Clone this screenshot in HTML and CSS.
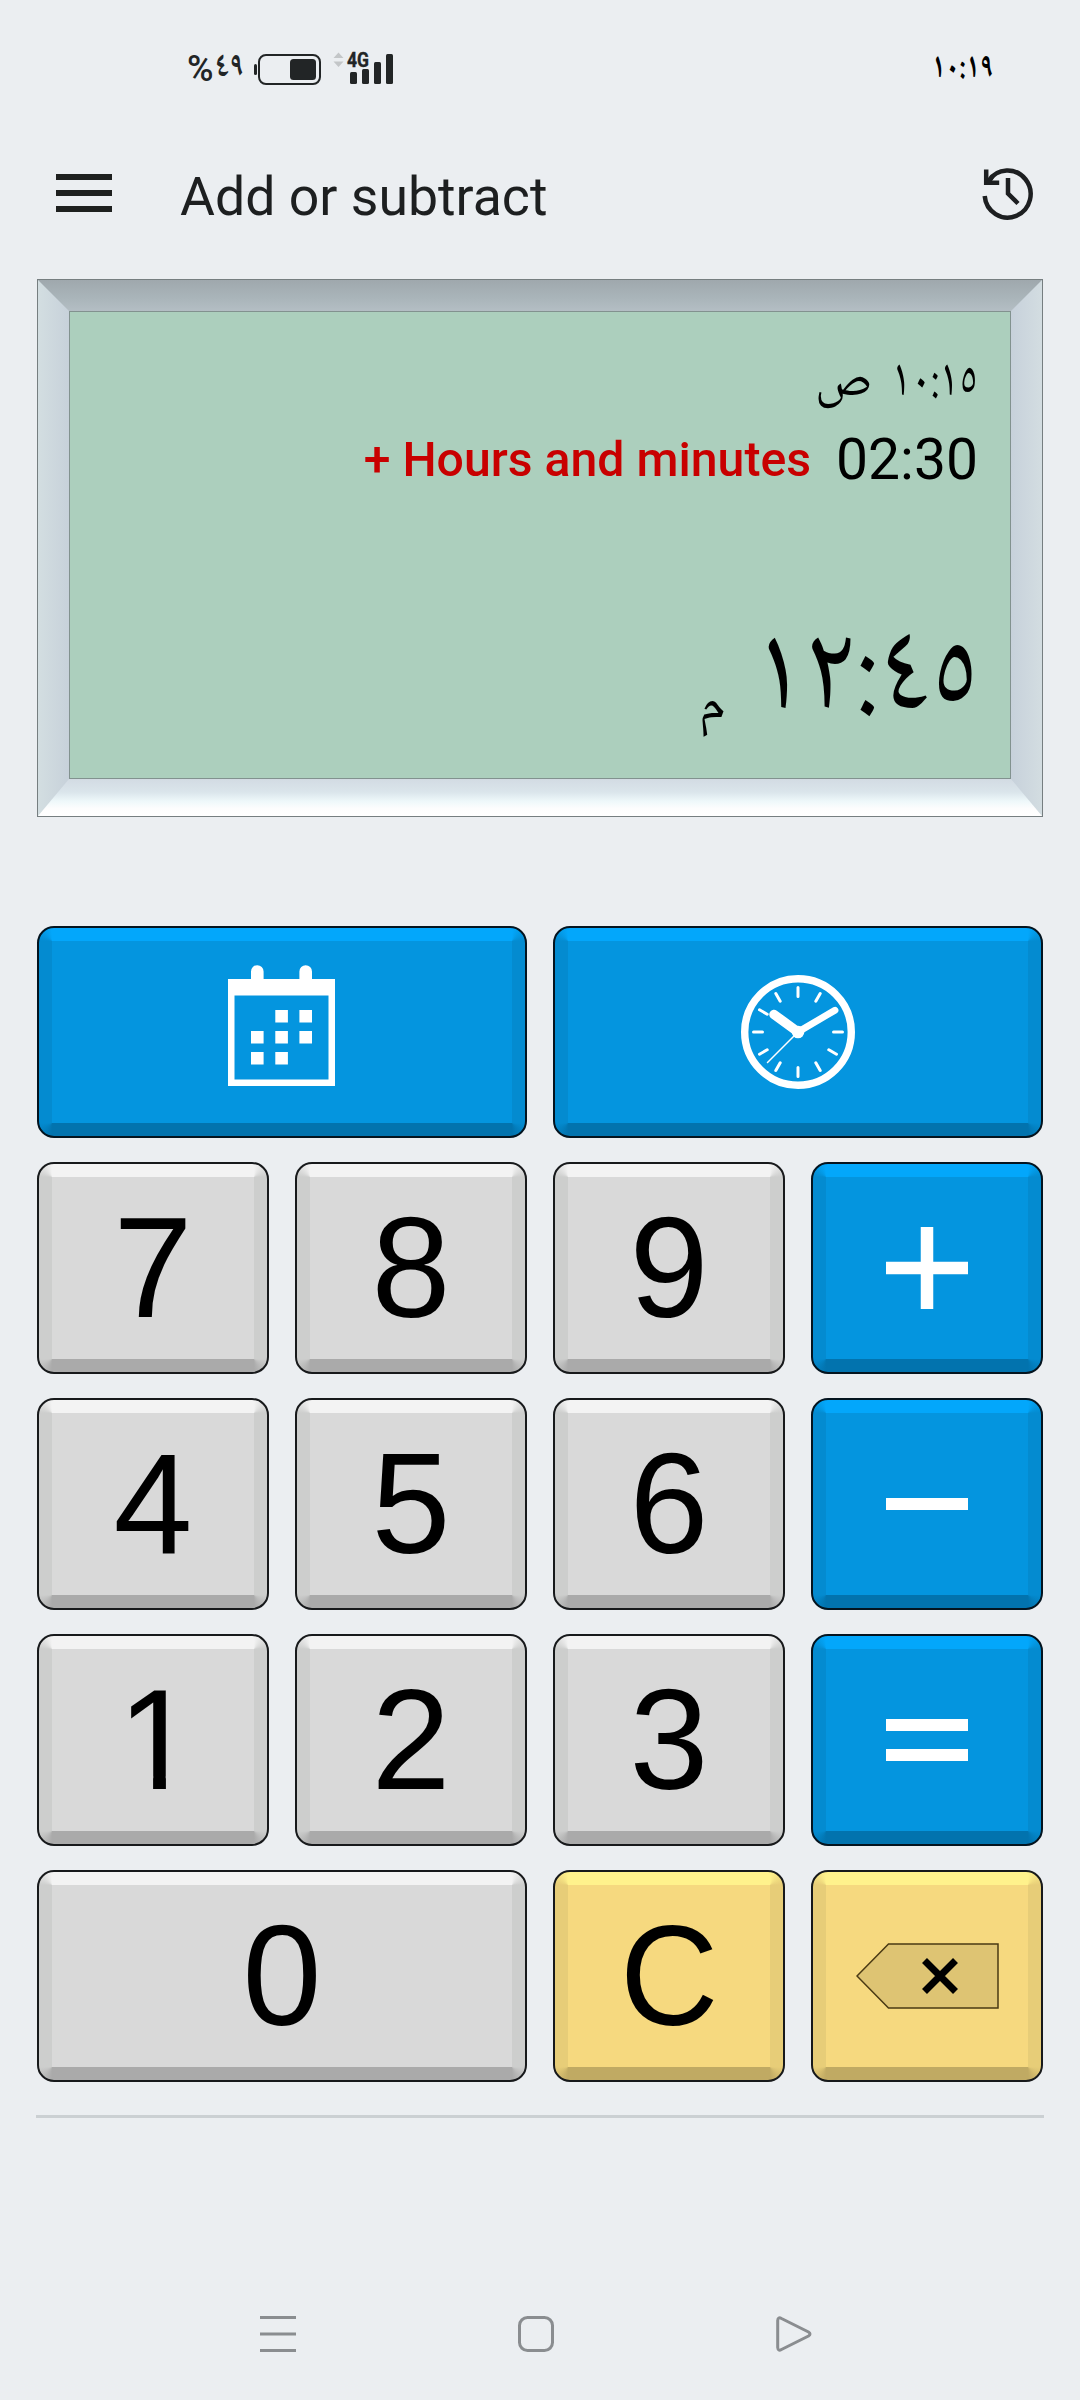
FILE: index.html
```html
<!DOCTYPE html>
<html lang="en">
<head>
<meta charset="utf-8">
<title>Add or subtract</title>
<link rel="stylesheet" href="styles.css">
</head>
<body>
<div class="screen">
  <header class="status">
    <div class="status-left">
      <span class="battery-text"><span class="percent">%</span><span class="ar battery-num">٤٩</span></span>
      <svg class="status-icons" width="142" height="36" viewBox="252 51 142 36" aria-hidden="true">
        <rect x="254" y="64" width="3" height="11" rx="1.5" fill="#222526"/>
        <rect x="259" y="55" width="61" height="29" rx="7" fill="none" stroke="#222526" stroke-width="2"/>
        <rect x="290" y="59" width="26" height="21" rx="3.5" fill="#222526"/>
        <path d="M338.500 52.500l5 5.500h-10zM338.500 67l5-5.500h-10z" fill="#c3c6c8"/>
        <g fill="#222526">
          <rect x="350" y="72" width="7" height="12" rx="1.500"/>
          <rect x="362" y="69" width="7" height="15" rx="1.500"/>
          <rect x="374" y="62" width="7" height="22" rx="1.500"/>
          <rect x="386" y="54" width="7" height="30" rx="1.500"/>
        </g>
        <text class="net" x="347" y="67" textLength="22" lengthAdjust="spacingAndGlyphs">4G</text>
      </svg>
    </div>
    <span class="ar clock" dir="rtl">١٠:١٩</span>
  </header>

  <div class="appbar">
    <svg class="menu" width="56" height="38" viewBox="0 0 56 38" aria-label="Menu"><path d="M0 3h56M0 19h56M0 35h56" stroke="#1e201f" stroke-width="6"/></svg>
    <h1 class="title">Add or subtract</h1>
    <svg class="history" width="54" height="54" viewBox="981 167 54 54" aria-label="History" fill="none" stroke="#1d1f21">
      <path d="M984.700 197A23 23.500 0 1 0 988.500 182" stroke-width="4.500"/>
      <path d="M986.200 170.500V183.700H999.200" stroke-width="4.500"/>
      <path d="M988 184L993 177" stroke-width="4"/>
      <path d="M1008 179v15.500l10 10" stroke-width="4.500"/>
    </svg>
  </div>

  <section class="panel">
    <div class="bevel bevel-top"></div>
    <div class="lcd" dir="rtl">
      <div class="line line-start"><span class="ar start-time">١٠:١٥</span><span class="ar start-period">ص</span></div>
      <div class="line line-op"><span class="amount" dir="ltr">02:30</span><span class="op" dir="ltr">+ Hours and minutes</span></div>
      <div class="line line-result"><span class="ar result">١٢:٤٥</span><span class="ar meridiem">م</span></div>
    </div>
    <div class="bevel bevel-bottom"></div>
  </section>

  <main class="keys">
    <button class="key blue wide" aria-label="Date">
      <svg width="107" height="122" viewBox="0 0 107 122" class="calendar" fill="#fff">
        <path fill-rule="evenodd" d="M0 14h23V6.500a6.300 6.300 0 0 1 12.600 0V14h35.800V6.500a6.300 6.300 0 0 1 12.600 0V14h23v107H0zM6.500 30.500v84h94v-84z"/>
        <path d="M47.300 45h12.600v12.400H47.300zM71.400 45H84v12.400H71.400zM23 66h12.600v12.400H23zM47.300 66h12.600v12.400H47.300zM71.400 66H84v12.400H71.400zM23 87h12.600v12.400H23zM47.300 87h12.600v12.400H47.300z"/>
      </svg>
    </button>
    <button class="key blue wide" aria-label="Time">
      <svg width="116" height="116" viewBox="-58 -58 116 116" stroke="#fff" fill="none" stroke-linecap="round">
        <circle r="53.300" stroke-width="7.400"/>
        <g stroke-width="3"><path d="M0-44.500V-35.500M22.200-38.500L17.800-30.800M38.500 22.200L30.800 17.800M22.200 38.500L17.800 30.800M0 44.500V35.500M-22.200 38.500L-17.800 30.800M-38.500 22.200L-30.800 17.800M-44.500 0H-35.500M44.500 0H35.500M-38.500-22.200L-30.800-17.800M-22.200-38.500L-17.800-30.800"/></g>
        <path d="M0 0L-24-17.500" stroke-width="9.500"/>
        <path d="M0 0L37-21.800" stroke-width="6.800"/>
        <path d="M0 0L-30.500 30.500" stroke-width="1.500"/>
        <circle r="6.300" fill="#fff" stroke="none"/>
      </svg>
    </button>

    <button class="key">7</button>
    <button class="key">8</button>
    <button class="key">9</button>
    <button class="key blue" aria-label="Plus"><svg width="82" height="82" viewBox="0 0 82 82"><path d="M0 41h82M41 0v82" stroke="#fff" stroke-width="12.500"/></svg></button>

    <button class="key">4</button>
    <button class="key">5</button>
    <button class="key">6</button>
    <button class="key blue" aria-label="Minus"><svg width="82" height="82" viewBox="0 0 82 82"><path d="M0 41h82" stroke="#fff" stroke-width="12"/></svg></button>

    <button class="key"><span class="one">1</span></button>
    <button class="key">2</button>
    <button class="key">3</button>
    <button class="key blue" aria-label="Equals"><svg width="82" height="82" viewBox="0 0 82 82"><path d="M0 26h82M0 56h82" stroke="#fff" stroke-width="12"/></svg></button>

    <button class="key wide">0</button>
    <button class="key yellow"><span class="clear">C</span></button>
    <button class="key yellow" aria-label="Backspace">
      <svg width="143" height="66" viewBox="856 1943 143 66">
        <path d="M857 1976L888.500 1944H998V2008H888.500z" fill="#dec473" stroke="#4a3a14" stroke-width="1.500"/>
        <path d="M924.500 1960.500l31 31M955.500 1960.500l-31 31" stroke="#000" stroke-width="7"/>
      </svg>
    </button>
  </main>

  <hr class="rule">

  <nav class="navbar">
    <svg width="36" height="36" viewBox="0 0 36 36"><path d="M0 1.500h36M0 18h36M0 34.500h36"/></svg>
    <svg width="36" height="36" viewBox="0 0 36 36"><rect x="1.500" y="1.500" width="33" height="33" rx="8"/></svg>
    <svg width="36" height="36" viewBox="0 0 36 36"><path d="M1.700 4.500Q2 .5 5.500 2.500L32.500 16Q35.500 18 32.500 20L5.500 33.500Q2 35.500 1.700 31.500z"/></svg>
  </nav>
</div>
</body>
</html>
```
FILE: styles.css
```css
* { box-sizing: border-box; }

body {
  margin: 0;
  background: #ebeef1;
  font-family: Roboto, "DejaVu Sans", sans-serif;
  color: #000;
}

svg { display: block; flex: none; }

.screen {
  width: 1080px;
  height: 2400px;
  display: flex;
  flex-direction: column;
}

.ar {
  font-family: "Noto Naskh Arabic", "Noto Sans Arabic", "DejaVu Sans", sans-serif;
  white-space: nowrap;
}

/* status bar */
.status {
  height: 138px;
  padding: 0 87px 0 187px;
  display: flex;
  justify-content: space-between;
  align-items: center;
}

.status-left {
  display: flex;
  align-items: center;
}

.battery-text {
  width: 65px;
  display: flex;
  align-items: center;
  color: #222526;
}

.percent { font-size: 36px; font-weight: 500; width: 28px; }
.battery-num { font-size: 32px; font-weight: 700; line-height: 60px; transform: scale(.92, 1.05); transform-origin: left; }
.net { font: 700 21px Roboto, sans-serif; fill: #222526; stroke: #222526; stroke-width: .4; }
.status-icons { overflow: visible; }
.clock { font-size: 32px; font-weight: 700; transform: scale(.86, 1.08); transform-origin: right; }

/* app bar */
.appbar {
  height: 110px;
  margin-bottom: 31px;
  padding: 0 45px 0 56px;
  display: flex;
  align-items: center;
}

.title {
  flex: 1;
  margin: 7px 0 0 68px;
  font-size: 53.6px;
  font-weight: 400;
  line-height: 70px;
  color: #1d1f20;
}

/* calculator display */
.panel {
  width: 1006px;
  height: 538px;
  margin: 0 37px;
  border: 1px solid #767e80;
  display: flex;
  flex-direction: column;
  background: linear-gradient(90deg, #d3dee1, #c7d1da 31px, #c7d1db calc(100% - 31px), #d3dde1);
}

.bevel-top {
  height: 31px;
  background: linear-gradient(#9fa8ad, #aab5ba 60%, #b4bec4);
  clip-path: polygon(0 0, 100% 0, calc(100% - 31px) 100%, 31px 100%);
}

.bevel-bottom {
  height: 37px;
  background: linear-gradient(#d3dbe3, #dae5eb 35%, #eef8fa 60%, #fdfdfd 80%, #fff);
  clip-path: polygon(31px 0, calc(100% - 31px) 0, 100% 100%, 0 100%);
}

.lcd {
  height: 468px;
  margin: 0 31px;
  padding: 0 32px;
  border: 1px solid #82928f;
  background: #accfbd;
}

.line { display: flex; align-items: center; }
.line-start { height: 112px; padding-top: 27px; gap: 10px; align-items: baseline; }
.start-time { font-size: 48px; transform: scale(.9, 1.12); transform-origin: right 51px; }
.start-period { font-size: 52px; }
.line-op { height: 71px; gap: 25px; }
.amount { font-size: 57px; }
.op { font-size: 48.2px; font-weight: 500; color: #c80000; }
.line-result { height: 254px; gap: 28px; align-items: flex-start; padding-top: 92px; }
.result { font-size: 113px; margin-right: -2px; transform: scaleY(1.095); transform-origin: right 120px; }
.meridiem { font-size: 55px; margin-top: 74px; }

/* keypad */
.keys {
  margin: 109px 37px 0;
  display: grid;
  grid-template-columns: repeat(4, 232px);
  grid-auto-rows: 212px;
  column-gap: 26px;
  row-gap: 24px;
}

.key {
  --face: #d9d9d9;
  --hi: #f3f3f3;
  --side: #cdcecd;
  --low: #aaaaaa;
  --b: 13px;
  --edge: #17191b;
  margin: 0;
  padding: 0;
  display: flex;
  align-items: center;
  justify-content: center;
  border: 2px solid var(--edge);
  border-radius: 17px;
  font: 142px/208px "Liberation Sans", Arial, sans-serif;
  color: #000;
  background:
    conic-gradient(from 270deg at 100% 100%, var(--side), var(--hi) 90deg) 0 0 / var(--b) var(--b) no-repeat,
    conic-gradient(from 0deg at 0 100%, var(--hi), var(--side) 90deg) 100% 0 / var(--b) var(--b) no-repeat,
    conic-gradient(from 90deg at 0 0, var(--side), var(--low) 90deg) 100% 100% / var(--b) var(--b) no-repeat,
    conic-gradient(from 180deg at 100% 0, var(--low), var(--side) 90deg) 0 100% / var(--b) var(--b) no-repeat,
    linear-gradient(var(--hi), var(--hi)) 0 0 / 100% var(--b) no-repeat,
    linear-gradient(var(--low), var(--low)) 0 100% / 100% var(--b) no-repeat,
    linear-gradient(90deg, var(--side) var(--b), var(--face) 0, var(--face) calc(100% - var(--b)), var(--side) 0);
}

/* the digit one is shown without its foot */
.one {
  display: block;
  height: 208px;
  margin-left: 8px;
  clip-path: polygon(0 0, 100% 0, 100% 140px, 48.400px 140px, 48.400px 170px, 35.600px 170px, 35.600px 140px, 0 140px);
}

.clear { display: block; transform: scaleX(.96); }

.wide { grid-column: span 2; }

.blue {
  --face: #0495df;
  --hi: #03a7fb;
  --side: #048bd0;
  --low: #0273ae;
  --edge: #04141f;
}

.yellow {
  --face: #f6d97f;
  --hi: #fff28c;
  --side: #e7cd78;
  --low: #c0aa63;
}

.calendar { margin: 0 1px 13px 0; }

.rule {
  width: 1008px;
  height: 3px;
  margin: 33px 36px 0;
  border: 0;
  background: #cbd0d3;
}

/* system navigation */
.navbar {
  margin-top: 198px;
  padding: 0 268px 0 260px;
  display: flex;
  justify-content: space-between;
}

.navbar svg { fill: none; stroke: #8a8d90; stroke-width: 3; }
```
